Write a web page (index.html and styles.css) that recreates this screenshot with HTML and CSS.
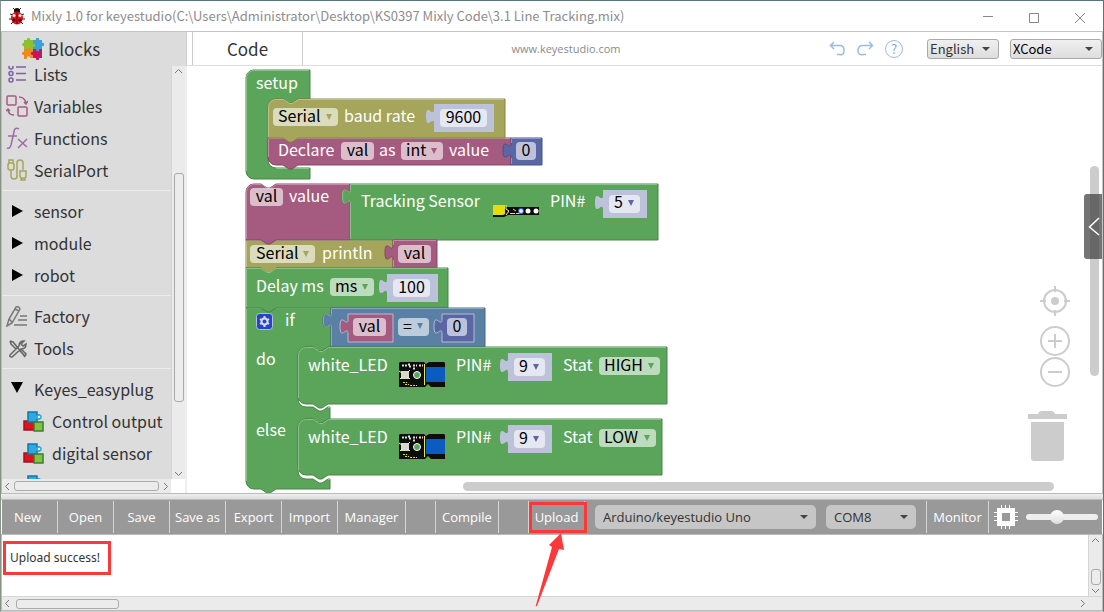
FILE: index.html
```html
<!DOCTYPE html>
<html lang="en">
<head>
<meta charset="utf-8">
<title>Mixly 1.0 for keyestudio</title>
<link rel="stylesheet" href="styles.css">
</head>
<body>
<div class="window">
  <header class="titlebar">
    <svg class="bug" width="16" height="18" viewBox="0 0 16 18" aria-hidden="true">
      <path d="M4 1l3 3M12 1L9 4M1 7l3 1M15 7l-3 1M0 12h3M16 12h-3M2 17l2-2M14 17l-2-2" stroke="#222" fill="none"/>
      <circle cx="8" cy="4" r="3" fill="#111"/>
      <ellipse cx="8" cy="11" rx="6" ry="6.5" fill="#e8121b"/>
      <path d="M8 5v12" stroke="#5a0508"/>
      <circle cx="5" cy="8.500" r="1.500" fill="#fff"/><circle cx="11" cy="8.500" r="1.500" fill="#fff"/>
      <circle cx="5" cy="13" r="1.500" fill="#300"/><circle cx="11" cy="13" r="1.500" fill="#300"/>
    </svg>
    <h1 class="title">Mixly 1.0 for keyestudio(C:\Users\Administrator\Desktop\KS0397 Mixly Code\3.1 Line Tracking.mix)</h1>
    <div class="window-buttons">
      <button class="win-btn" aria-label="Minimize"><svg width="12" height="12"><path d="M1 3.500h10"/></svg></button>
      <button class="win-btn" aria-label="Maximize"><svg width="12" height="12"><path d="M1.500 .5h9v9h-9z"/></svg></button>
      <button class="win-btn" aria-label="Close"><svg width="12" height="12"><path d="M1 0l10 10M11 0L1 10"/></svg></button>
    </div>
  </header>

  <main class="main">
    <aside class="sidebar">
      <h2 class="sidebar-head">
        <svg width="22" height="22" viewBox="0 0 22 22" aria-hidden="true">
          <path fill="#8cc02c" d="M2 2h3c-1-2 4-3 3 0h3v4c2-1 3 3 0 3v2H8c0-3-4-3-3 0H2V8C-1 8 0 4 2 5z"/>
          <path fill="#3aa0d8" d="M11 2h3c-1-3 4-3 3 0h3v3c3-1 3 4 0 3v3h-3c1 3-4 3-3 0h-3V9c3 0 2-4 0-3z"/>
          <path fill="#f08a1c" d="M2 11h3c-1-3 4-3 3 0h3v3c-3 0-3 4 0 3v3H8c0-3-4-2-3 1H2v-4c-3 0-3-4 0-3z"/>
          <path fill="#c8145c" d="M11 11h3c0 3 4 3 3 0h3v9h-3c1 3-4 3-3 0h-3v-3c-3 1-3-4 0-3z"/>
        </svg>
        Blocks
      </h2>
      <div class="sidebar-body">
        <nav class="toolbox">
          <ul class="tree">
            <li><a class="row" href="#lists"><svg class="icon" viewBox="0 0 22 22" stroke="#7d60a8"><circle cx="5" cy="4" r="2"/><circle cx="5" cy="10.500" r="2"/><circle cx="5" cy="17" r="2"/><path d="M10 4h10M10 10.500h10M10 17h10"/></svg>Lists</a></li>
            <li><a class="row" href="#variables"><svg class="icon" viewBox="0 0 22 22" stroke="#a55b80"><rect x="1" y="1" width="9" height="9" rx="1"/><rect x="12" y="12" width="9" height="9" rx="1"/><path d="M13 2c4 0 6 2 7 6M18 7l2 2 2-3M8 20c-4 0-6-2-6-6M0 16l2-2 2 2"/></svg>Variables</a></li>
            <li><a class="row" href="#functions"><svg class="icon" viewBox="0 0 22 22" stroke="#a069a8"><path d="M13 2c-3-2-5 0-5 3L5 18c-1 3-2 4-4 3M2 9h9M12 12l9 8M21 12l-9 9"/></svg>Functions</a></li>
            <li><a class="row" href="#serialport"><svg class="icon" viewBox="0 0 22 22" stroke="#a5a55b"><rect x="2" y="4" width="6" height="7" rx="2"/><path d="M3 4V1h4v3M5 11v6c0 4 6 4 6 0V4c0-4 6-4 6 0v7M14 12h6v5c0 3-6 3-6 0zM15 19v2h4v-2"/></svg>SerialPort</a></li>
            <li class="rule"></li>
            <li><a class="row" href="#sensor"><svg class="icon solid" viewBox="0 0 22 22"><path d="M6 5l11 6-11 6z"/></svg>sensor</a></li>
            <li><a class="row" href="#module"><svg class="icon solid" viewBox="0 0 22 22"><path d="M6 5l11 6-11 6z"/></svg>module</a></li>
            <li><a class="row" href="#robot"><svg class="icon solid" viewBox="0 0 22 22"><path d="M6 5l11 6-11 6z"/></svg>robot</a></li>
            <li class="rule"></li>
            <li><a class="row" href="#factory"><svg class="icon" viewBox="0 0 22 22" stroke="#777"><path d="M1 21l2-7 7-12q3-1 4 2L6 18zM9 4l4 2M3 14l3 3M14 11h7M12 15h9M8 20h13"/></svg>Factory</a></li>
            <li><a class="row" href="#tools"><svg class="icon" viewBox="0 0 22 22" stroke="#666"><path d="M4 4l3 1 10 12 2 3M4 4l1 3 5 5M14 14l5 5q2-2 0-3l-4-4M4 18l9-9c0-3 2-5 5-5l-3 3 2 2 3-2c0 4-3 5-5 5l-9 8q-3 0-2-2z"/></svg>Tools</a></li>
            <li class="rule"></li>
            <li><a class="row" href="#keyes"><svg class="icon solid" viewBox="0 0 22 22"><path d="M5 4h12l-6 11z"/></svg>Keyes_easyplug</a></li>
            <li><a class="row child" href="#control"><svg class="icon" viewBox="0 0 22 22"><use href="#cubes"/></svg>Control output</a></li>
            <li><a class="row child" href="#digital"><svg class="icon" viewBox="0 0 22 22"><use href="#cubes"/></svg>digital sensor</a></li>
            <li><a class="row child" href="#analog"><svg class="icon" viewBox="0 0 22 22"><use href="#cubes"/></svg>analog sensor</a></li>
          </ul>
        </nav>
        <div class="scroll scroll-v" aria-hidden="true">
          <svg width="9" height="6"><path d="M1 5l3.500-3.500L8 5"/></svg>
          <i class="lead"></i><i class="thumb"></i><i class="trail"></i>
          <svg width="9" height="6"><path d="M1 1l3.500 3.500L8 1"/></svg>
        </div>
        <div class="scroll scroll-h" aria-hidden="true">
          <svg width="6" height="9"><path d="M5 1L1.500 4.500 5 8"/></svg>
          <i class="thumb"></i>
          <svg width="6" height="9"><path d="M1 1l3.500 3.500L1 8"/></svg>
        </div>
      </div>
    </aside>

    <section class="editor">
      <div class="tabs">
        <button class="tab">Code</button>
        <a class="site" href="#site">www.keyestudio.com</a>
        <div class="history">
          <button class="tool" aria-label="Undo"><svg width="18" height="16"><path d="M5 1L1.500 4.500 5 8M2 4.500h9q4 0 4 5t-4 4H8"/></svg></button>
          <button class="tool" aria-label="Redo"><svg width="18" height="16"><path d="M12 1l3.500 3.500L12 8M15 4.500H6q-5 0-5 5t5 4h3"/></svg></button>
          <button class="tool help" aria-label="Help">?</button>
        </div>
        <label class="fx-select lang"><select aria-label="Language"><option>English</option></select></label>
        <label class="fx-select mode"><select aria-label="Mode"><option>XCode</option></select></label>
      </div>

      <div class="canvas">
        <svg class="blocks" width="100%" height="100%">
          <defs>
            <g id="cubes">
              <path d="M2 11h10v9H2z" fill="#e60f1f" stroke="#a3121c"/>
              <path d="M6 2h9v3h2l1 2-1 2h-2v3H6z" fill="#29abe2" stroke="#1477a8"/>
              <path d="M12 12h9v9h-9z" fill="#82c341" stroke="#3f7e2b"/>
              <circle cx="17" cy="7" r="2" fill="#dff" stroke="#29abe2"/>
            </g>
            <g id="led">
              <path d="M2 1h24l2 2 3-2h15l1 1v24H33l-3-3-3 3H1V2z" fill="#0c0e0d"/>
              <rect x="28" y="6" width="19" height="15" fill="#0a5cc0"/>
              <path d="M26.500 3v21" stroke="#f2e64a"/>
              <path d="M4 4.500h5M10 3.500h3M11 5.500h3M15 4.500h4M21 4.500h4M15 7.500h3" stroke="#ddd" stroke-width="2" stroke-dasharray="2 1"/>
              <path d="M5 21.500h4M7 23.500h4M12 24.500h7" stroke="#e5d941" stroke-dasharray="2 1"/>
              <rect x="3" y="10" width="8" height="8" fill="#d8d8c8"/>
              <path d="M1 10l3 2M12 9l-2 2M2 18l2-2M12 18l-2-2" stroke="#eee"/>
              <circle cx="19" cy="14" r="3.500" fill="#5ba55b" stroke="#fff"/>
            </g>
            <path id="tri" d="M0 0h6l-3 6z"/>
          </defs>
          <g transform="translate(-187 -66)">
            <!-- setup -->
            <path class="b green" d="M246 78a8 8 0 0 1 8-8H310V99H298l-6 4h-3l-6-4h-7a8 8 0 0 0-8 8V160a8 8 0 0 0 8 8H310V179H254a8 8 0 0 1-8-8z"/>
            <path class="hl hl-green" d="M246.500 171V78a7.500 7.500 0 0 1 8-7.500H309M276 168.500H309"/>
            <path class="b magenta" d="M268 138H511V165H298l-6 4h-3l-6-4h-7a8 8 0 0 1-8-8z"/>
            <path class="hl hl-magenta" d="M268.500 157V138.500H510"/>
            <path class="b olive" d="M268 107a8 8 0 0 1 8-8h7l6 4h3l6-4H505V138H298l-6 4h-3l-6-4H268z"/>
            <path class="hl hl-olive" d="M268.500 137V107a7.500 7.500 0 0 1 8-7.500h7l6 4h3l6-4H504"/>
            <path class="b pale" d="M434 104H494V132H434V124c0-10-8 8-8-7.500s8 2.500 8-7.500z"/>
            <path class="b indigo" d="M511 138H542V165H511V158c0-10-8 8-8-7.500s8 2.500 8-7.500z"/>
            <path class="hl hl-indigo" d="M511.500 164V158M511.500 143V138.500H541"/>
            <!-- variable assignment -->
            <path class="b olive" d="M246 240H393V268H276l-6 4h-3l-6-4H246z"/>
            <path class="hl hl-olive" d="M246.500 267V240.500H392"/>
            <path class="b magenta" d="M246 192a8 8 0 0 1 8-8h7l6 4h3l6-4H350V240H276l-6 4h-3l-6-4H246z"/>
            <path class="hl hl-magenta" d="M246.500 239V192a7.500 7.500 0 0 1 8-7.500h7l6 4h3l6-4H349"/>
            <path class="b green" d="M350 184H658V240H350V204c0-10-8 8-8-7.500s8 2.500 8-7.500z"/>
            <path class="hl hl-green" d="M350.500 239V204c0-10-8 8-8-7.500s8 2.500 8-7.500V184.500H657"/>
            <path class="b pale" d="M603 190H647V218H603V210c0-10-8 8-8-7.500s8 2.500 8-7.500z"/>
            <path class="b magenta" d="M393 240H437V268H393V260c0-10-8 8-8-7.500s8 2.500 8-7.500z"/>
            <path class="hl hl-magenta" d="M393.500 267V260M393.500 245V240.500H436"/>
            <!-- if / else -->
            <path class="b green" d="M246 308H331V347H328l-6 4h-3l-6-4h-7a8 8 0 0 0-8 8V399a8 8 0 0 0 8 8h7l6 4h3l6-4h2V419H328l-6 4h-3l-6-4h-7a8 8 0 0 0-8 8V471a8 8 0 0 0 8 8h7l6 4h3l6-4h2V489H276l-6 4h-3l-6-4h-7a8 8 0 0 1-8-8z"/>
            <path class="hl hl-green" d="M246.500 481V308.500H330M328 407.500H330M328 479.500H330"/>
            <!-- delay -->
            <path class="b green" d="M246 268H261l6 4h3l6-4H448V308H276l-6 4h-3l-6-4H246z"/>
            <path class="hl hl-green" d="M246.500 307V268.500H261l6 4h3l6-4H447"/>
            <path class="tail" d="M261 267H276V268l-6 4h-3l-6-4z"/>
            <path class="b pale" d="M387 274H438V302H387V294c0-10-8 8-8-7.500s8 2.500 8-7.500z"/>
            <!-- comparison -->
            <path class="b blue" d="M331 308H485V347H331V328c0-10-8 8-8-7.500s8 2.500 8-7.500z"/>
            <path class="hl hl-blue" d="M331.500 346V328c0-10-8 8-8-7.500s8 2.500 8-7.500V308.500H484"/>
            <path class="b magenta ring" d="M348 314H393V342H348V334c0-10-8 8-8-7.500s8 2.500 8-7.500z"/>
            <path class="b indigo ring" d="M442 314H474V342H442V334c0-10-8 8-8-7.500s8 2.500 8-7.500z"/>
            <!-- LED outputs -->
            <path class="b green" d="M298 355a8 8 0 0 1 8-8h7l6 4h3l6-4H667V404H328l-6 4h-3l-6-4h-7a8 8 0 0 1-8-8z"/>
            <path class="hl hl-green" d="M298.500 398V355a7.500 7.500 0 0 1 8-7.500h7l6 4h3l6-4H666"/>
            <path class="b green" d="M298 427a8 8 0 0 1 8-8h7l6 4h3l6-4H662V475H328l-6 4h-3l-6-4h-7a8 8 0 0 1-8-8z"/>
            <path class="hl hl-green" d="M298.500 470V427a7.500 7.500 0 0 1 8-7.500h7l6 4h3l6-4H661"/>
            <path class="b pale" d="M508 353H552V381H508V373c0-10-8 8-8-7.500s8 2.500 8-7.500z"/>
            <path class="b pale" d="M508 425H552V453H508V445c0-10-8 8-8-7.500s8 2.500 8-7.500z"/>

            <!-- field backgrounds -->
            <g class="field">
              <rect x="273" y="108" width="65" height="18" rx="4"/>
              <rect x="440" y="109" width="47" height="18" rx="4"/>
              <rect x="341" y="142" width="33" height="18" rx="4"/>
              <rect x="401" y="142" width="42" height="18" rx="4"/>
              <rect x="516" y="142" width="20" height="18" rx="4"/>
              <rect x="250" y="188" width="33" height="18" rx="4"/>
              <rect x="609" y="195" width="31" height="18" rx="4"/>
              <rect x="250" y="245" width="65" height="18" rx="4"/>
              <rect x="398" y="245" width="33" height="18" rx="4"/>
              <rect x="330" y="278" width="44" height="18" rx="4"/>
              <rect x="393" y="279" width="37" height="18" rx="4"/>
              <rect x="353" y="318" width="33" height="18" rx="4"/>
              <rect x="398" y="318" width="31" height="18" rx="4"/>
              <rect x="447" y="318" width="20" height="18" rx="4"/>
              <rect x="514" y="358" width="31" height="18" rx="4"/>
              <rect x="599" y="357" width="61" height="18" rx="4"/>
              <rect x="514" y="430" width="31" height="18" rx="4"/>
              <rect x="599" y="429" width="57" height="18" rx="4"/>
            </g>

            <g class="label">
              <text x="256" y="89">setup</text>
              <text x="344" y="122">baud rate</text>
              <text x="278" y="156">Declare</text>
              <text x="379" y="156">as</text>
              <text x="449" y="156">value</text>
              <text x="289" y="202">value</text>
              <text x="361" y="207">Tracking Sensor</text>
              <text x="550" y="207">PIN#</text>
              <text x="322" y="259">println</text>
              <text x="256" y="292">Delay ms</text>
              <text x="285" y="326">if</text>
              <text x="256" y="365">do</text>
              <text x="256" y="436">else</text>
              <text x="308" y="371">white_LED</text>
              <text x="456" y="371">PIN#</text>
              <text x="563" y="371">Stat</text>
              <text x="308" y="443">white_LED</text>
              <text x="456" y="443">PIN#</text>
              <text x="563" y="443">Stat</text>
            </g>

            <foreignObject x="278" y="105" width="60" height="20"><select class="f" aria-label="Serial port"><option>Serial</option></select></foreignObject>
            <foreignObject x="440" y="106" width="47" height="20"><input class="f mid" aria-label="Baud rate" value="9600"></foreignObject>
            <foreignObject x="341" y="139" width="33" height="20"><input class="f mid" aria-label="Variable name" value="val"></foreignObject>
            <foreignObject x="406" y="139" width="36" height="20"><select class="f" aria-label="Variable type"><option>int</option></select></foreignObject>
            <foreignObject x="516" y="139" width="20" height="20"><input class="f mid" aria-label="Initial value" value="0"></foreignObject>
            <foreignObject x="250" y="185" width="33" height="20"><input class="f mid" aria-label="Assigned variable" value="val"></foreignObject>
            <foreignObject x="614" y="191" width="26" height="20"><select class="f" aria-label="Sensor pin"><option>5</option></select></foreignObject>
            <foreignObject x="256" y="242" width="58" height="20"><select class="f" aria-label="Print port"><option>Serial</option></select></foreignObject>
            <foreignObject x="398" y="242" width="33" height="20"><input class="f mid" aria-label="Printed variable" value="val"></foreignObject>
            <foreignObject x="335" y="275" width="39" height="20"><select class="f" aria-label="Delay unit"><option>ms</option></select></foreignObject>
            <foreignObject x="393" y="276" width="37" height="20"><input class="f mid" aria-label="Delay" value="100"></foreignObject>
            <foreignObject x="353" y="315" width="33" height="20"><input class="f mid" aria-label="Compared variable" value="val"></foreignObject>
            <foreignObject x="403" y="315" width="26" height="20"><select class="f" aria-label="Operator"><option>=</option></select></foreignObject>
            <foreignObject x="447" y="315" width="20" height="20"><input class="f mid" aria-label="Compared value" value="0"></foreignObject>
            <foreignObject x="519" y="355" width="26" height="20"><select class="f" aria-label="LED pin"><option>9</option></select></foreignObject>
            <foreignObject x="604" y="354" width="56" height="20"><select class="f" aria-label="LED state"><option>HIGH</option></select></foreignObject>
            <foreignObject x="519" y="427" width="26" height="20"><select class="f" aria-label="Else LED pin"><option>9</option></select></foreignObject>
            <foreignObject x="604" y="426" width="52" height="20"><select class="f" aria-label="Else LED state"><option>LOW</option></select></foreignObject>

            <g class="arrows">
              <use href="#tri" x="326" y="114" fill="#a5a55b"/>
              <use href="#tri" x="431" y="148" fill="#a55b80"/>
              <use href="#tri" x="628" y="200" fill="#5b67a5"/>
              <use href="#tri" x="303" y="251" fill="#a5a55b"/>
              <use href="#tri" x="362" y="284" fill="#5ba55b"/>
              <use href="#tri" x="417" y="323" fill="#5b80a5"/>
              <use href="#tri" x="533" y="364" fill="#5b67a5"/>
              <use href="#tri" x="648" y="363" fill="#5ba55b"/>
              <use href="#tri" x="533" y="436" fill="#5b67a5"/>
              <use href="#tri" x="644" y="435" fill="#5ba55b"/>
            </g>

            <!-- mutator gear -->
            <rect x="256.500" y="313.500" width="16" height="16" rx="3" fill="#2446c4" stroke="#b5bfe6"/>
            <circle cx="264.500" cy="321.500" r="3" fill="none" stroke="#d5dbf2" stroke-width="2"/>
            <path d="M264.500 316v2M264.500 325v2M260 319l1.500 1M267.500 323l1.500 1M260 324l1.500-1M267.500 320l1.500-1" stroke="#d5dbf2" stroke-width="2"/>

            <!-- tracking sensor module -->
            <path d="M506 207h33v8h-31l-4 2h-11V205h12z" fill="#0c0c0c"/>
            <path d="M493 205h12v9l-2 1h-10z" fill="#e8dc06"/>
            <path d="M506 205v4l3 2-3 4" fill="none" stroke="#f6f6c8"/>
            <path d="M510 213.500h5M513 209l3 2M516 213.500h6" stroke="#f0e33a"/>
            <circle cx="521" cy="211" r="3" fill="#2b5fc4"/>
            <circle cx="521" cy="211" r="2" fill="#e6eefb"/><circle cx="528" cy="211" r="2.500" fill="#fff"/><circle cx="536" cy="211" r="2.500" fill="#fff"/>
            <use href="#led" x="398" y="361"/>
            <use href="#led" x="398" y="433"/>
          </g>
        </svg>

        <div class="canvas-tools">
          <button class="round" aria-label="Centre"><svg width="30" height="30"><circle cx="15" cy="15" r="11"/><path d="M15 0v6M15 24v6M0 15h6M24 15h6"/><circle class="dot" cx="15" cy="15" r="4"/></svg></button>
          <button class="round" aria-label="Zoom in"><svg width="30" height="30"><circle cx="15" cy="15" r="14"/><path d="M8 15h14M15 8v14"/></svg></button>
          <button class="round" aria-label="Zoom out"><svg width="30" height="30"><circle cx="15" cy="15" r="14"/><path d="M8 15h14"/></svg></button>
        </div>
        <svg class="trash" width="40" height="50" aria-label="Trash"><path d="M1 3h10q1-3 4-3h9q3 0 4 3h12v5H1zM4 11h33v36q0 3-3 3H7q-3 0-3-3z"/></svg>
        <i class="bar bar-v"></i>
        <i class="bar bar-h"></i>
        <button class="drawer" aria-label="Show code panel"><svg width="12" height="20"><path d="M11 1L1.500 10 11 18"/></svg></button>
      </div>
    </section>
  </main>

  <div class="splitter"></div>

  <div class="toolbar">
    <button class="cmd first">New</button>
    <button class="cmd">Open</button>
    <button class="cmd">Save</button>
    <button class="cmd">Save as</button>
    <button class="cmd">Export</button>
    <button class="cmd">Import</button>
    <button class="cmd wide">Manager</button>
    <span class="cmd gap"></span>
    <button class="cmd medium">Compile</button>
    <span class="cmd gap"></span>
    <button class="cmd marked">Upload
      <svg class="arrow" width="30" height="76" aria-hidden="true"><path d="M26 0l3 17-5-1L2 73q-2 1-1-1L17 14l-3-2z"/></svg>
    </button>
    <label class="pick board"><select aria-label="Board"><option>Arduino/keyestudio Uno</option></select></label>
    <label class="pick port"><select aria-label="Port"><option>COM8</option></select></label>
    <button class="cmd medium monitor">Monitor</button>
    <svg class="chip" width="24" height="24" aria-hidden="true"><path d="M7.500 0v24M11.500 0v24M15.500 0v24M0 7.500h24M0 11.500h24M0 15.500h24" stroke="#fff"/><path d="M3 3h18v18H3z" fill="#fff"/><path d="M8 8h8v8H8z" fill="#999"/></svg>
    <input class="slider" type="range" min="0" max="100" value="42" aria-label="Font size">
  </div>

  <section class="console">
    <output class="log"><span class="message">Upload success!</span></output>
    <div class="scroll scroll-v" aria-hidden="true">
      <svg width="9" height="6"><path d="M1 5l3.500-3.500L8 5"/></svg>
      <i class="lead"></i><i class="thumb"></i>
      <svg width="9" height="6"><path d="M1 1l3.500 3.500L8 1"/></svg>
    </div>
    <div class="scroll scroll-h" aria-hidden="true">
      <svg width="6" height="9"><path d="M5 1L1.500 4.500 5 8"/></svg>
      <i class="thumb"></i><i class="trail"></i>
      <svg width="6" height="9"><path d="M1 1l3.500 3.500L1 8"/></svg>
    </div>
  </section>
</div>
</body>
</html>
```
FILE: styles.css
```css
* { box-sizing: border-box; }

body {
  margin: 0;
  background: #47696b;
  font-family: "Noto Sans CJK SC", "Noto Sans", sans-serif;
  color: #333;
}

button, select, input { font: inherit; color: inherit; }
button { border: 0; padding: 0; background: none; }
a { color: inherit; text-decoration: none; }

.window {
  display: flex;
  flex-direction: column;
  height: 100vh;
  border: 1px solid #55767a;
  border-left-color: #879487;
  border-bottom-color: #ccc;
  background: #fff;
}

/* title bar */
.titlebar {
  display: flex;
  flex: 0 0 31px;
  align-items: center;
  gap: 6px;
  padding-left: 8px;
  border-bottom: 1px solid #c4c4c4;
}
.title { margin: 0; flex: 1; font-size: 13px; font-weight: 400; line-height: 20px; color: #8d8d8d; white-space: nowrap; }
.window-buttons { display: flex; }
.win-btn { width: 46px; height: 29px; }
.win-btn svg { fill: none; stroke: #888; vertical-align: middle; }

/* main area */
.main { display: flex; flex: 1; min-height: 0; border-left: 1px solid #bbb; }
.sidebar { display: flex; flex: 0 0 185px; flex-direction: column; background: #dcdcdc; }
.sidebar-head {
  display: flex;
  flex: 0 0 34px;
  align-items: center;
  gap: 4px;
  margin: 0;
  padding-left: 20px;
  font-size: 17px;
  font-weight: 400;
  line-height: 32px;
  border-right: 1px solid #ccc;
}
.sidebar-body {
  display: grid;
  grid-template: minmax(0, 1fr) 14px / minmax(0, 1fr) 14px;
  flex: 1;
  min-height: 0;
  border-right: 2px solid #eee;
  background: #fff;
}
.toolbox { overflow: hidden; background: #dcdcdc; }
.tree { margin: -8px 0 0; padding: 0; list-style: none; }
.row {
  display: flex;
  align-items: center;
  gap: 6px;
  height: 32px;
  padding-left: 4px;
  font-size: 16px;
  line-height: 16px;
  white-space: nowrap;
}
.child { padding-left: 20px; gap: 8px; }
.rule { height: 1px; margin: 4px 0; background: #ececec; }
.icon { flex: none; width: 22px; height: 22px; fill: none; stroke-width: 1.5; }
.solid { fill: #000; }

/* drawn scroll bars */
.scroll { display: flex; align-items: center; background: #ebebeb; padding: 2px; }
.scroll svg { flex: none; fill: none; stroke: #777; }
.scroll-v { flex-direction: column; border-left: 1px solid #d5d5d5; }
.scroll .thumb { border: 1px solid #aaa; border-radius: 3px; background: #ececec; }
.scroll-v .thumb { width: 10px; }
.scroll-h .thumb { height: 10px; }
.sidebar .lead { flex: 98; }
.sidebar .scroll-v .thumb { flex: 226; }
.sidebar .trail { flex: 68; }
.sidebar .scroll-h { gap: 4px; }
.sidebar .scroll-h .thumb { flex: 1; }

/* editor */
.editor { display: flex; flex: 1; flex-direction: column; min-width: 0; border-right: 1px solid #c4c4c4; }
.tabs { display: flex; flex: 0 0 34px; align-items: center; padding-left: 5px; border-bottom: 1px solid #ddd; }
.tab { width: 111px; height: 33px; border: solid #ccc; border-width: 0 1px; font-size: 17px; line-height: 32px; }
.site { flex: 1; text-align: center; font-family: "Open Sans", sans-serif; font-size: 11px; color: #8a8a8a; }
.history { display: flex; align-items: center; gap: 10px; margin-right: 24px; }
.tool { width: 18px; height: 18px; }
.tool svg { display: block; fill: none; stroke: #9cbae6; stroke-width: 1.5; }
.help { border: 1px solid #9cbae6; border-radius: 50%; color: #7fa5df; font-size: 13px; line-height: 16px; }

.fx-select, .pick { position: relative; }
.fx-select select, .pick select { display: block; width: 100%; height: 100%; appearance: none; border: 0; background: none; padding: 0; }
.fx-select::after, .pick::after {
  content: "";
  position: absolute;
  right: 8px;
  top: 50%;
  margin-top: -2px;
  border: solid transparent;
  border-width: 4px 4px 0;
  border-top-color: #444;
  pointer-events: none;
}
.fx-select {
  height: 20px;
  padding-left: 2px;
  border: 1px solid #aaa;
  border-radius: 3px;
  background: linear-gradient(#f0f0f0, #ddd);
  font-size: 13px;
  line-height: 18px;
}
.lang { width: 72px; margin-right: 11px; }
.mode { width: 92px; color: #000; }

/* block canvas */
.canvas { position: relative; flex: 1; min-height: 0; overflow: hidden; }
.blocks { display: block; }
.b { stroke-width: 1; }
.green { fill: #5ba55b; stroke: #498449; }
.olive { fill: #a5a55b; stroke: #848449; }
.magenta { fill: #a55b80; stroke: #844966; }
.indigo { fill: #5b67a5; stroke: #495284; }
.blue { fill: #5b80a5; stroke: #496684; }
.pale { fill: #bdc2db; stroke: none; }
.tail { fill: #a5a55b; }
.ring { stroke: #b5bbd3; }
.hl { fill: none; stroke-width: 1; }
.hl-green { stroke: #8cc08c; }
.hl-olive { stroke: #c0c08c; }
.hl-magenta { stroke: #c08ca6; }
.hl-indigo { stroke: #8c95c0; }
.hl-blue { stroke: #8ca6c0; }
.field { fill: #fff; fill-opacity: 0.6; }
.label { fill: #fff; font-size: 16px; }
.arrows { pointer-events: none; }
.f {
  display: block;
  width: 100%;
  height: 20px;
  border: 0;
  padding: 0;
  appearance: none;
  background: none;
  color: #000;
  font-size: 16px;
  line-height: 20px;
}
.mid { text-align: center; }

.canvas-tools { position: absolute; right: 32px; bottom: 105px; display: grid; }
.round { width: 30px; height: 30px; margin-bottom: 1px; }
.round:first-child { margin-bottom: 10px; }
.round svg { display: block; fill: none; stroke: #ccc; stroke-width: 2; }
.round .dot { fill: #ccc; stroke: none; }
.trash { position: absolute; right: 35px; bottom: 32px; fill: #ccc; }
.bar { position: absolute; border-radius: 5px; background: #ccc; }
.bar-v { right: 3px; top: 100px; bottom: 117px; width: 9px; }
.bar-h { left: 276px; right: 48px; bottom: 2px; height: 9px; }
.drawer { position: absolute; right: 0; top: 128px; width: 18px; height: 65px; border-radius: 3px 0 0 3px; background: rgba(70, 70, 70, 0.75); }
.drawer svg { display: block; margin-left: 4px; fill: none; stroke: #fff; stroke-width: 1.5; }

.splitter { flex: 0 0 7px; border: solid #bbb; border-width: 1px 0; background: linear-gradient(#eee, #ddd); }

/* command bar */
.toolbar { display: flex; flex: 0 0 34px; align-items: center; margin: 0 1px; background: #999; font-family: "Open Sans", sans-serif; font-size: 13px; }
.cmd { position: relative; flex: 0 0 56px; height: 32px; border-right: 1px solid #d5d5d5; color: #fff; line-height: 30px; white-space: nowrap; }
.first { padding-right: 4px; }
.wide { flex-basis: 68px; }
.medium { flex-basis: 63px; }
.gap { flex-basis: 30px; }
.marked::before { content: ""; position: absolute; inset: 1px -3px 0 0; border: 3px solid #fa3a3a; }
.arrow { position: absolute; left: 6px; top: 32px; z-index: 2; fill: #fa3a3a; }
.pick { height: 24px; padding-left: 8px; border-radius: 5px; background: #c6c6c6; color: #333; }
.board { flex: 1; margin: 0 10px; }
.port { flex: 0 0 90px; margin-right: 10px; }
.monitor { border-left: 1px solid #d5d5d5; }
.chip { flex: none; margin: 0 8px 0 5px; }
.slider { width: 72px; margin: 0 4px 0 0; appearance: none; background: none; }
.slider::-webkit-slider-runnable-track { height: 6px; border-radius: 3px; background: #eee; }
.slider::-webkit-slider-thumb { appearance: none; width: 14px; height: 14px; margin-top: -4px; border-radius: 50%; background: linear-gradient(#fff, #ddd); }

/* console */
.console {
  display: grid;
  grid-template: 61px 14px / minmax(0, 1fr) 14px;
  border: solid #bbb;
  border-width: 1px;
}
.log { padding: 6px 0 0 1px; }
.message { display: inline-block; padding: 0 8px 0 4px; border: 3px solid #fa3a3a; font-family: "Noto Sans", sans-serif; font-size: 12px; line-height: 28px; }
.console .lead { flex: 1; }
.console .scroll-v .thumb { height: 16px; margin-bottom: 3px; }
.console .scroll-h { grid-column: 1 / 3; padding-right: 16px; border-top: 1px solid #d5d5d5; }
.console .scroll-h .thumb { width: 103px; margin-left: 6px; }
.console .trail { flex: 1; }
```
